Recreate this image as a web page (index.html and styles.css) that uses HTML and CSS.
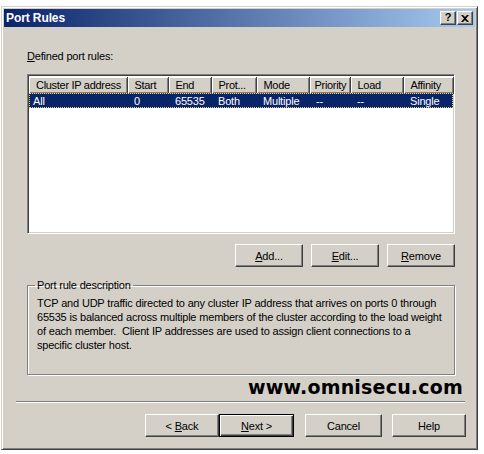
FILE: index.html
```html
<!DOCTYPE html>
<html>
<head>
<meta charset="utf-8">
<title>Port Rules</title>
<link rel="stylesheet" href="styles.css">
</head>
<body>
<div class="window">
  <div class="titlebar">
    <span class="title">Port Rules</span>
    <div class="tbtns">
      <span class="tbtn help">?</span>
      <span class="tbtn close">
        <svg width="8" height="7" viewBox="0 0 8 7"><path d="M0 0h2l2 2 2-2h2L5 3.5 8 7H6L4 5 2 7H0l3-3.5z" fill="#000"/></svg>
      </span>
    </div>
  </div>
  <div class="page">
    <div class="label"><u>D</u>efined port rules:</div>
    <div class="listview">
      <table class="grid">
        <colgroup>
          <col class="c1"><col class="c2"><col class="c3"><col class="c4"><col class="c5"><col class="c6"><col class="c7"><col class="c8">
        </colgroup>
        <thead>
          <tr><th>Cluster IP address</th><th>Start</th><th>End</th><th>Prot...</th><th>Mode</th><th>Priority</th><th>Load</th><th>Affinity</th></tr>
        </thead>
        <tbody>
          <tr class="sel"><td>All</td><td>0</td><td>65535</td><td>Both</td><td>Multiple</td><td>--</td><td>--</td><td>Single</td></tr>
        </tbody>
      </table>
    </div>
    <div class="actions">
      <button class="btn"><u>A</u>dd...</button>
      <button class="btn"><u>E</u>dit...</button>
      <button class="btn"><u>R</u>emove</button>
    </div>
    <fieldset class="group">
      <legend>Port rule description</legend>
      <p>TCP and UDP traffic directed to any cluster IP address that arrives on ports 0 through 65535 is balanced across multiple members of the cluster according to the load weight of each member.&nbsp; Client IP addresses are used to assign client connections to a specific cluster host.</p>
    </fieldset>
    <div class="watermark">www.omnisecu.com</div>
  </div>
  <div class="sep"></div>
  <div class="footer">
    <button class="btn">&lt; <u>B</u>ack</button>
    <button class="btn default"><u>N</u>ext &gt;</button>
    <button class="btn cancel">Cancel</button>
    <button class="btn help-btn">Help</button>
  </div>
</div>
</body>
</html>
```

FILE: styles.css
```css
* { box-sizing: border-box; }
html, body { margin: 0; padding: 0; background: #fff; }
body { font-family: "Liberation Sans", Arial, sans-serif; font-size: 11px; color: #000; }

.window {
  width: 477px;
  height: 444px;
  margin: 6px 0 0 1px;
  background: #d4d0c8;
  border: 1px solid;
  border-color: #d4d0c8 #404040 #404040 #d4d0c8;
  box-shadow: inset 1px 1px #fff, inset -1px -1px #808080;
  padding: 2px;
  display: flex;
  flex-direction: column;
}

.titlebar {
  height: 18px;
  background: linear-gradient(to right, #0a246a 0%, #a6caf0 100%);
  display: flex;
  align-items: center;
  justify-content: space-between;
  padding: 0 2px 0 2px;
}
.title { color: #fff; font-weight: bold; font-size: 12px; letter-spacing: -0.1px; }
.tbtns { display: flex; gap: 1px; }
.tbtn {
  width: 16px; height: 14px;
  background: #d4d0c8;
  border: 1px solid;
  border-color: #fff #404040 #404040 #fff;
  box-shadow: inset -1px -1px #808080;
  display: flex; align-items: center; justify-content: center;
  font-weight: bold; font-size: 11px; line-height: 1;
}
.tbtn.help { padding-bottom: 1px; }

.page { padding: 23px 20px 0 23px; }
.label { line-height: 13px; letter-spacing: -0.2px; }
u { text-decoration: underline; text-underline-offset: 1px; }

.listview {
  margin-top: 11px;
  height: 160px;
  background: #fff;
  border: 1px solid;
  border-color: #808080 #fff #fff #808080;
  box-shadow: inset 1px 1px #404040, inset -1px -1px #d4d0c8;
  padding: 2px 0 0 1px;
}
.grid { border-collapse: collapse; table-layout: fixed; width: 424px; }
.c1 { width: 98px; } .c2 { width: 41px; } .c3 { width: 43px; } .c4 { width: 45px; }
.c5 { width: 53px; } .c6 { width: 41px; } .c7 { width: 53px; } .c8 { width: 50px; }
.grid th {
  height: 16px;
  padding: 0 0 0 7px;
  background: #d4d0c8;
  font-weight: normal;
  text-align: left;
  white-space: nowrap;
  overflow: hidden;
  letter-spacing: -0.3px;
  border-right: 1px solid #404040;
  border-bottom: 1px solid #404040;
  box-shadow: inset 1px 1px #fff, inset -1px -1px #808080;
}
.grid th:nth-child(6) { padding-left: 5px; }
.grid td {
  height: 15px;
  padding: 0 0 0 7px;
  white-space: nowrap;
  overflow: hidden;
  letter-spacing: -0.2px;
}
.grid td:first-child { padding-left: 4px; }
.sel td { background: #0a246a; color: #fff; }
.sel { outline: 1px dotted #f0d070; outline-offset: -1px; }

.actions {
  margin-top: 10px;
  display: flex;
  justify-content: flex-end;
  gap: 8px;
}
.btn {
  width: 68px;
  height: 23px;
  background: #d4d0c8;
  border: 1px solid;
  border-color: #fff #404040 #404040 #fff;
  box-shadow: inset -1px -1px #808080;
  font-family: "Liberation Sans", Arial, sans-serif;
  font-size: 11px;
  color: #000;
  padding: 0;
  letter-spacing: -0.2px;
}

.group {
  margin: 12px 0 0 0;
  height: 96px;
  padding: 0 12px 0 9px;
  border: 1px solid #808080;
  box-shadow: 1px 1px 0 #fff, inset 1px 1px 0 #fff;
}
.group legend { padding: 0 2px; margin-left: -2px; line-height: 13px; letter-spacing: -0.2px; }
.group p { margin: 4px 0 0 0; line-height: 14px; letter-spacing: -0.22px; word-spacing: 0.2px; }

.watermark {
  margin: 1px -8px 0 0;
  text-align: right;
  font-family: "DejaVu Sans", Verdana, sans-serif;
  font-weight: bold;
  font-size: 19px;
  line-height: 22px;
  letter-spacing: 0.2px;
}

.sep {
  margin: 3px 10px 0 12px;
  border-top: 1px solid #808080;
  border-bottom: 1px solid #fff;
}

.footer {
  margin-top: 11px;
  padding-right: 9px;
  display: flex;
  justify-content: flex-end;
}
.footer .btn { width: 74px; height: 23px; }
.footer .default {
  width: 75px;
  border: 1px solid #000;
  box-shadow: inset 1px 1px #fff, inset -1px -1px #404040, inset -2px -2px #808080;
}
.footer .cancel { margin-left: 11px; width: 77px; }
.footer .help-btn { margin-left: 10px; }
```
